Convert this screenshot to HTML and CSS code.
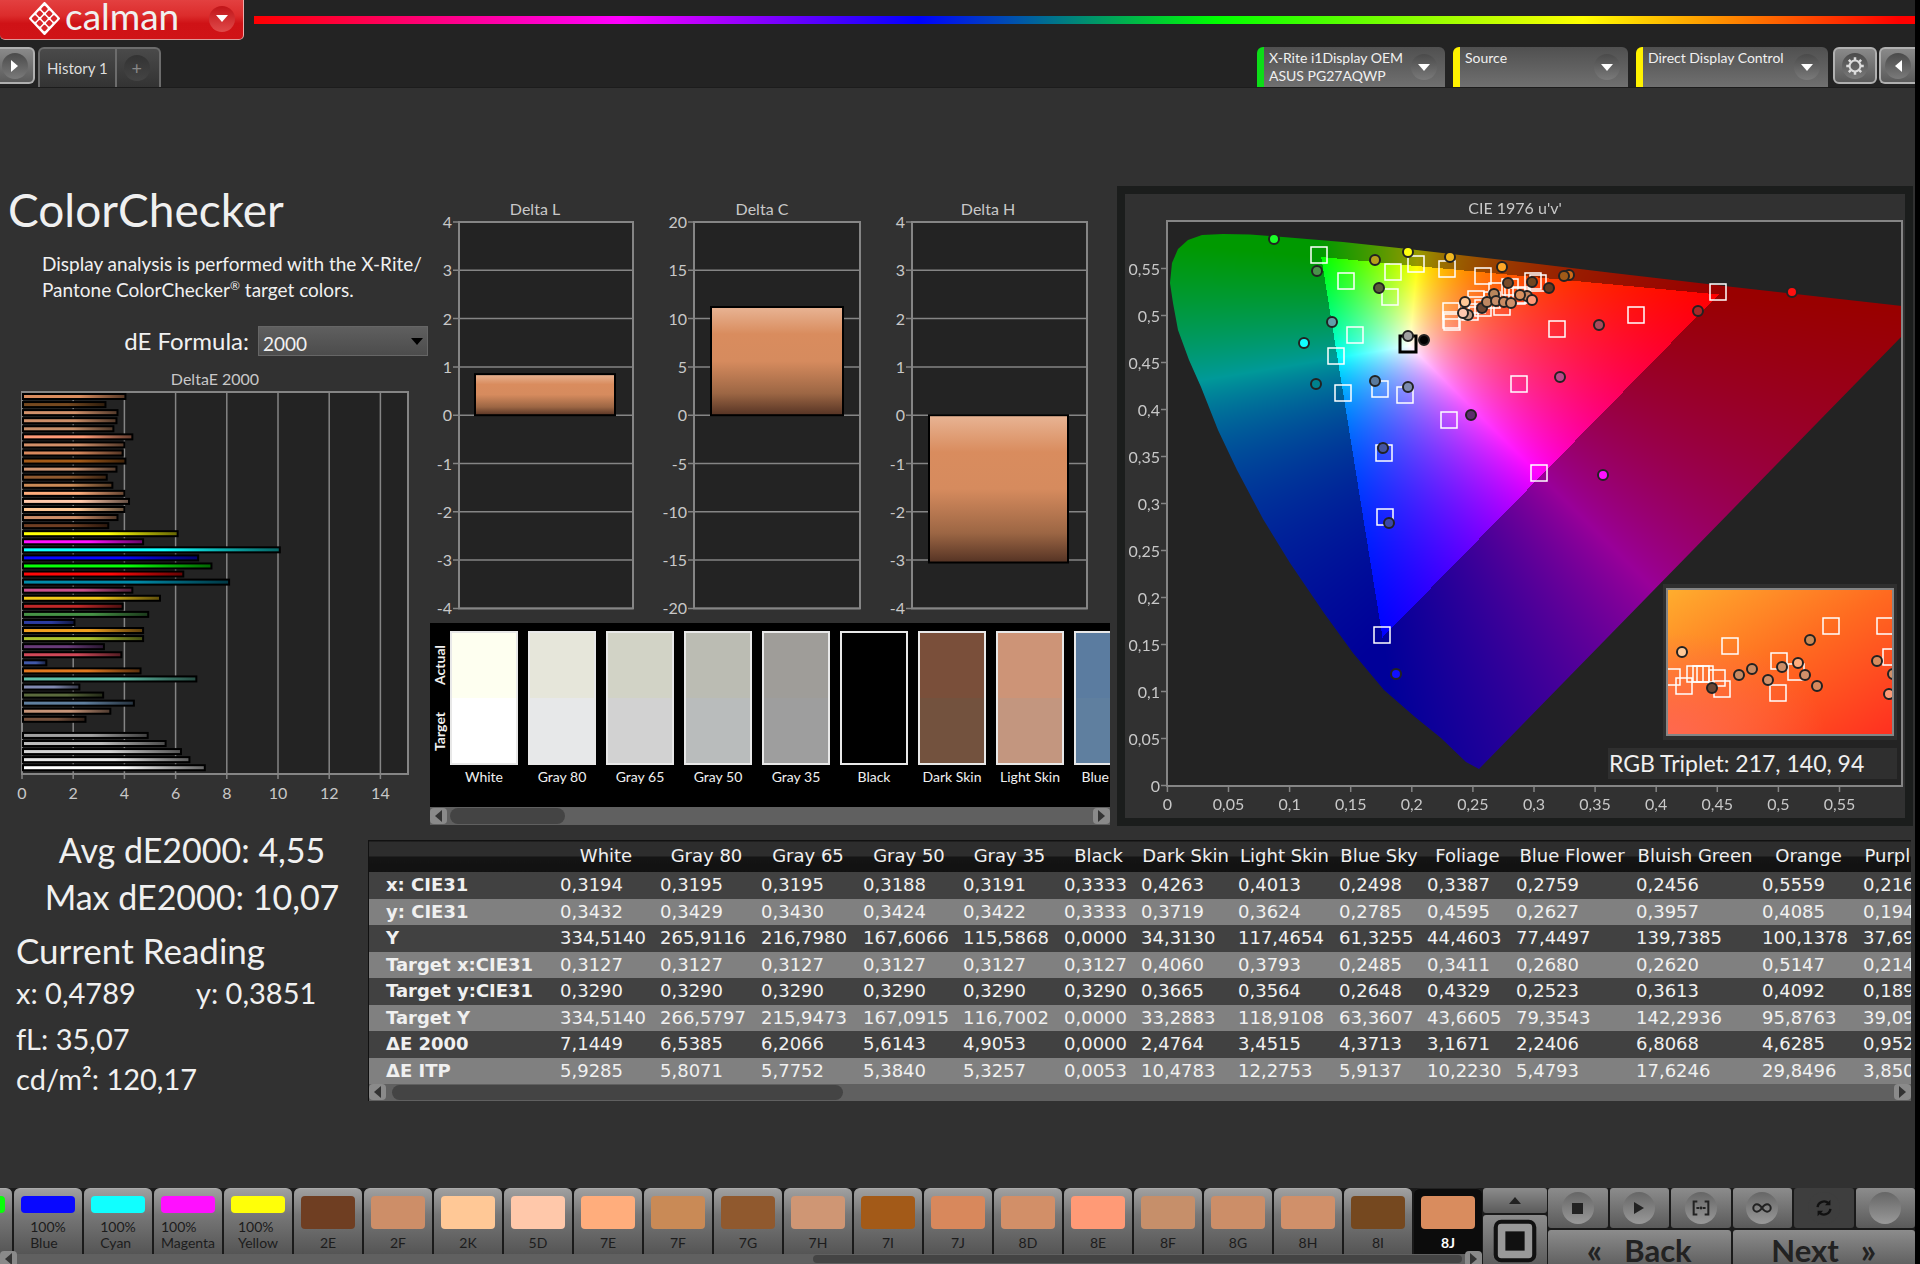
FILE: index.html
```html
<!DOCTYPE html>
<html lang="en">
<head>
  <meta charset="UTF-8" />
  <meta name="viewport" content="width=device-width, initial-scale=1.0" />
  <title>Calman - ColorChecker</title>
  <link rel="stylesheet" href="styles.css">
</head>
<body>
  <div class="app">
    <header class="header">
      <div class="brand-row">
        <button class="brand" aria-label="calman menu">
          <svg class="brand-mark" viewBox="0 0 32 32" aria-hidden="true">
            <path d="M16 1 L30 16 L16 31 L2 16 Z" fill="#fff" stroke="#fff" stroke-width="2" stroke-linejoin="round" />
            <g fill="#d8262a" transform="rotate(45 16 16)">
              <rect x="7" y="7" width="5" height="5" rx="1" /><rect x="13.5" y="7" width="5" height="5" rx="1" /><rect x="20" y="7" width="5" height="5" rx="1" />
              <rect x="7" y="13.5" width="5" height="5" rx="1" /><rect x="13.5" y="13.5" width="5" height="5" rx="1" /><rect x="20" y="13.5" width="5" height="5" rx="1" />
              <rect x="7" y="20" width="5" height="5" rx="1" /><rect x="13.5" y="20" width="5" height="5" rx="1" /><rect x="20" y="20" width="5" height="5" rx="1" />
            </g>
          </svg>
          <span class="brand-name">calman</span>
          <span class="knob knob-red"><i class="tri tri-down"></i></span>
        </button>
        <div class="rainbow"></div>
      </div>

      <div class="tab-row">
        <button class="square-btn square-left" aria-label="Show panel"><span class="knob"><i class="tri tri-right"></i></span></button>
        <nav class="tabs">
          <button class="tab">History 1</button>
          <button class="tab tab-add" aria-label="Add tab"><span class="knob knob-dark">+</span></button>
        </nav>
        <div class="devices">
          <button class="device device-meter">
            <span>X-Rite i1Display OEM<br>ASUS PG27AQWP</span>
            <span class="knob"><i class="tri tri-down"></i></span>
          </button>
          <button class="device device-source">
            <span>Source</span>
            <span class="knob"><i class="tri tri-down"></i></span>
          </button>
          <button class="device device-display">
            <span>Direct Display Control</span>
            <span class="knob"><i class="tri tri-down"></i></span>
          </button>
        </div>
        <button class="square-btn" aria-label="Settings">
          <span class="knob">
            <svg class="gear" viewBox="0 0 24 24" aria-hidden="true">
              <circle cx="12" cy="12" r="6.5" fill="none" stroke="#ddd" stroke-width="2.4" />
              <g stroke="#ddd" stroke-width="3">
                <path d="M12 1.5V5M12 19v3.5M1.5 12H5M19 12h3.5M4.6 4.6l2.4 2.4M17 17l2.4 2.4M4.6 19.4L7 17M17 7l2.4-2.4" />
              </g>
            </svg>
          </span>
        </button>
        <button class="square-btn square-right" aria-label="Hide panel"><span class="knob"><i class="tri tri-left"></i></span></button>
      </div>
    </header>

    <main class="main">
      <div class="charts">
        <section class="col-left">
          <h1>ColorChecker</h1>
          <p class="intro">Display analysis is performed with the X-Rite/<br>Pantone ColorChecker<sup>®</sup> target colors.</p>
          <div class="formula">
            <label for="formula">dE Formula:</label>
            <div class="select-wrap">
              <select id="formula">
                <option>2000</option>
                <option>ITP</option>
              </select>
            </div>
          </div>
          <svg class="chart" id="de-chart" viewBox="0 0 430 440" role="img" aria-label="DeltaE 2000"></svg>
        </section>

        <section class="col-mid">
          <svg class="chart" id="delta-chart" viewBox="0 0 680 437" role="img" aria-label="Delta L, Delta C, Delta H"></svg>
          <div class="swatches">
            <div class="swatch-area">
              <div class="swatch-side"><span>Actual</span><span>Target</span></div>
              <div class="swatch-list" id="swatches"></div>
            </div>
            <div class="scrollbar">
              <button aria-label="Scroll left"><i class="tri tri-left"></i></button>
              <div class="track"><div class="thumb thumb-swatch"></div></div>
              <button aria-label="Scroll right"><i class="tri tri-right"></i></button>
            </div>
          </div>
        </section>

        <section class="cie">
          <canvas id="cie-canvas" width="780" height="624"></canvas>
          <svg id="cie-chart" viewBox="0 0 780 624" role="img" aria-label="CIE 1976 u'v'"></svg>
        </section>
      </div>

      <div class="readings">
        <section class="stats">
          <div class="summary">Avg dE2000: 4,55</div>
          <div class="summary">Max dE2000: 10,07</div>
          <h2>Current Reading</h2>
          <div class="xy"><span>x: 0,4789</span><span>y: 0,3851</span></div>
          <div class="lum">
            <div>fL: 35,07</div>
            <div>cd/m²: 120,17</div>
          </div>
        </section>

        <section class="data">
          <div class="data-clip">
            <table id="data-table">
              <colgroup></colgroup>
              <thead></thead>
              <tbody></tbody>
            </table>
          </div>
          <div class="scrollbar">
            <button aria-label="Scroll left"><i class="tri tri-left"></i></button>
            <div class="track"><div class="thumb thumb-data"></div></div>
            <button aria-label="Scroll right"><i class="tri tri-right"></i></button>
          </div>
        </section>
      </div>
    </main>

    <footer class="footer">
      <div class="strip">
        <div class="patches" id="patches"></div>
        <div class="scrollbar">
          <button aria-label="Scroll left"><i class="tri tri-left"></i></button>
          <div class="track"><div class="thumb thumb-patch"></div></div>
          <button aria-label="Scroll right"><i class="tri tri-right"></i></button>
        </div>
      </div>
      <div class="window-ctl">
        <button class="key key-up" aria-label="Expand"><i class="tri tri-up"></i></button>
        <button class="key key-window" aria-label="Pattern window">
          <svg viewBox="0 0 32 32" aria-hidden="true">
            <rect x="2" y="2" width="28" height="28" rx="4" fill="#999" stroke="#111" stroke-width="3" />
            <rect x="9" y="9" width="14" height="14" fill="#111" />
          </svg>
        </button>
      </div>
      <div class="transport">
        <button class="key" aria-label="Stop"><span class="knob"><i class="stop"></i></span></button>
        <button class="key" aria-label="Play"><span class="knob"><i class="tri tri-play"></i></span></button>
        <button class="key" aria-label="Read series">
          <span class="knob">
            <svg viewBox="0 0 24 24" aria-hidden="true"><path d="M8 5H4v14h4M16 5h4v14h-4M7 12h3M14 12h3" fill="none" stroke="#222" stroke-width="2.2" /><circle cx="12" cy="12" r="1.6" fill="#222" /></svg>
          </span>
        </button>
        <button class="key" aria-label="Read continuous">
          <span class="knob">
            <svg viewBox="0 0 24 24" aria-hidden="true"><path d="M12 12C9.5 8.5 8 8 6.5 8a4 4 0 0 0 0 8c1.5 0 3-.5 5.5-4s4-4 5.500-4a4 4 0 0 1 0 8c-1.5 0-3-.5-5.5-4z" fill="none" stroke="#222" stroke-width="2.2" /></svg>
          </span>
        </button>
        <button class="key key-on" aria-label="Repeat">
          <span class="knob">
            <svg viewBox="0 0 24 24" aria-hidden="true"><path d="M5 11a7 7 0 0 1 12-4M19 13a7 7 0 0 1-12 4" fill="none" stroke="#111" stroke-width="2.6" /><path d="M19 3v6h-6zM5 21v-6h6z" fill="#111" /></svg>
          </span>
        </button>
        <button class="key" aria-label="Record"><span class="knob knob-light"></span></button>
        <button class="key key-wide"><span class="chev">«</span>Back</button>
        <button class="key key-wide">Next<span class="chev">»</span></button>
      </div>
    </footer>
  </div>

  <script src="script.js"></script>
</body>
</html>
```
FILE: styles.css
```css
/* --- basic reset ---------------------------------------------------- */
* {
  margin: 0;
  padding: 0;
  box-sizing: border-box;
}

:root {
  --bg: #313131;
  --dark: #232323;
  --fg: #f0f0f0;
  --muted: #c8c8c8;
  --line: #858585;
}

body {
  background: #000;
  color: var(--fg);
  font-family: Lato, "Open Sans", sans-serif;
  font-size: 16px;
  overflow: hidden;
}

button,
select {
  font: inherit;
  color: inherit;
  border: 0;
  cursor: pointer;
}

h1, h2 {
  font-weight: 400;
}

.app {
  display: flex;
  flex-direction: column;
  height: 100vh;
  margin-right: 5px;
  background: var(--bg);
}

/* --- small parts ---------------------------------------------------- */
.tri {
  display: block;
  width: 0;
  height: 0;
  border: 6px solid transparent;
}
.tri-down { border-top: 7px solid #fff; border-bottom: 0; }
.tri-up { border-bottom: 7px solid #222; border-top: 0; }
.tri-right { border-left: 7px solid #fff; border-right: 0; }
.tri-left { border-right: 7px solid #fff; border-left: 0; }
.tri-play { border-left: 10px solid #222; border-right: 0; }

.stop {
  width: 11px;
  height: 11px;
  background: #222;
}

.knob {
  display: flex;
  align-items: center;
  justify-content: center;
  width: 26px;
  height: 26px;
  border-radius: 50%;
  background: linear-gradient(#4a4a4a, #7a7a7a);
  flex-shrink: 0;
}
.knob-red { background: linear-gradient(#c01418, #e04a4a); }
.knob-dark { background: linear-gradient(#333, #444); color: #888; font-size: 18px; }
.knob-light { background: linear-gradient(#6a6a6a, #9a9a9a); }

.gear { width: 20px; height: 20px; }

/* --- header --------------------------------------------------------- */
.header {
  height: 88px;
  background: var(--dark);
  border-bottom: 1px solid #1c1c1c;
}

.brand-row {
  display: flex;
  height: 47px;
}

.brand {
  display: flex;
  align-items: center;
  width: 244px;
  height: 40px;
  padding: 0 8px 2px 28px;
  background: linear-gradient(#e34040, #dc2c2c 40%, #cf1216 60%, #d01317);
  border-right: 1px solid #eaa;
  border-bottom: 1px solid #d99;
  border-radius: 0 0 5px 5px;
}
.brand-mark { width: 33px; height: 33px; }
.brand-name {
  flex: 1;
  padding: 0 0 5px 4px;
  font-size: 37px;
  line-height: 44px;
  text-align: left;
}

.rainbow {
  flex: 1;
  height: 8px;
  margin: 16px 0 0 10px;
  background: linear-gradient(90deg, #f00, #f0f 22%, #00f 40%, #0f0 58%, #ff0 80%, #f00 99%);
}

.tab-row {
  display: flex;
  height: 40px;
}

.square-btn {
  display: flex;
  align-items: center;
  justify-content: center;
  width: 44px;
  height: 37px;
  margin-left: 2px;
  background: linear-gradient(#8a8a8a, #5a5a5a);
  border: 2px solid #b0b0b0;
  border-radius: 6px;
}
.square-left {
  width: 35px;
  margin-left: 0;
  padding-right: 4px;
  border-left: 0;
  border-radius: 0 6px 6px 0;
}
.square-right {
  width: 36px;
  border-right: 0;
  border-radius: 6px 0 0 6px;
}

.tabs {
  display: flex;
  margin-left: 3px;
}
.tab {
  height: 40px;
  padding: 0 7px;
  background: linear-gradient(#4a4a4a, #333);
  border: 2px solid #6c6c6c;
  border-bottom: 0;
  border-radius: 6px 0 0 0;
  font-size: 15px;
  color: #ddd;
}
.tab-add {
  width: 46px;
  margin-left: -2px;
  border-radius: 0 6px 0 0;
}

.devices {
  display: flex;
  gap: 8px;
  margin: 0 3px 0 auto;
}
.device {
  display: flex;
  justify-content: space-between;
  width: 188px;
  padding: 2px 8px 0 5px;
  background: linear-gradient(#505050, #707070);
  border-left: 7px solid #fff200;
  border-radius: 6px 6px 0 0;
  font-size: 14px;
  line-height: 18px;
  text-align: left;
  white-space: nowrap;
}
.device .knob { margin: 5px 0 0; }
.device-meter { border-left-color: #0ddc18; }
.device-source { width: 175px; }
.device-display { width: 192px; }

/* --- charts --------------------------------------------------------- */
.main {
  flex: 1;
  min-height: 0;
  padding-top: 92px;
}

.charts {
  display: grid;
  grid-template-columns: 430fr 680fr 7fr 796fr 2fr;
  align-items: start;
}
.charts > * { min-width: 0; }

.chart {
  display: block;
  width: 100%;
}

.col-left h1 {
  padding: 2px 0 0 8px;
  font-size: 46px;
  line-height: 56px;
}

.intro {
  padding: 13px 0 0 42px;
  font-size: 19px;
  line-height: 26px;
  white-space: nowrap;
}
.intro sup { font-size: 12px; line-height: 0; }

.formula {
  display: flex;
  justify-content: flex-end;
  align-items: center;
  gap: 9px;
  margin: 23px 2px 13px 0;
  font-size: 24px;
  line-height: 30px;
}
.select-wrap {
  position: relative;
  width: 170px;
}
.select-wrap::after {
  content: "";
  position: absolute;
  right: 5px;
  top: 12px;
  border: 6px solid transparent;
  border-top: 7px solid #000;
  border-bottom: 0;
  pointer-events: none;
}
.select-wrap select {
  display: block;
  width: 100%;
  height: 30px;
  padding: 2px 4px 0;
  appearance: none;
  background: linear-gradient(#5f5f5f, #4c4c4c);
  border: 1px solid #666;
  font-size: 19px;
}

.axis { font-size: 16px; fill: var(--muted); }
.chart-title { font-size: 16px; fill: var(--muted); text-anchor: middle; }
.end { text-anchor: end; }
.mid { text-anchor: middle; }
.plot { fill: var(--dark); }
.frame { fill: none; stroke: var(--line); stroke-width: 2; }
.grid { stroke: var(--line); stroke-width: 1.5; }
.bar { stroke: #000; stroke-width: 2; }

/* --- swatches ------------------------------------------------------- */
.swatches { margin-top: 6px; }
.swatch-area {
  display: flex;
  height: 184px;
  padding-top: 8px;
  background: #000;
  overflow: hidden;
}
.swatch-side {
  display: flex;
  flex-direction: column;
  justify-content: space-around;
  width: 20px;
  height: 134px;
  font-size: 14px;
  line-height: 20px;
  font-weight: 700;
}
.swatch-side span {
  writing-mode: vertical-rl;
  transform: rotate(180deg);
  text-align: center;
}
.swatch-list {
  display: flex;
  flex: 1;
  gap: 10px;
  min-width: 0;
  overflow: hidden;
}
.swatch {
  width: 68px;
  flex-shrink: 0;
  font-size: 14px;
  line-height: 24px;
  text-align: center;
  white-space: nowrap;
}
.swatch-color {
  height: 134px;
  border: 2px solid #e8e8e8;
}

.scrollbar {
  display: flex;
  align-items: center;
  height: 18px;
  background: #606060;
}
.scrollbar button {
  display: flex;
  align-items: center;
  justify-content: center;
  width: 17px;
  height: 16px;
  background: #8a8a8a;
  border-radius: 4px;
}
.scrollbar .tri-left { border-right-color: #333; }
.scrollbar .tri-right { border-left-color: #333; }
.track {
  flex: 1;
  height: 100%;
  padding: 1px 3px;
}
.thumb {
  height: 100%;
  background: #444;
  border-radius: 8px;
}
.thumb-swatch { width: 18%; }
.thumb-data { width: 30%; margin-left: 3px; }
.thumb-patch { width: 45%; margin-left: 55%; }

/* --- CIE diagram ---------------------------------------------------- */
.cie {
  display: grid;
  grid-column: 4;
  margin-top: 6px;
  border: 8px solid #1b1d1c;
}
.cie canvas,
.cie svg {
  grid-area: 1 / 1;
  width: 100%;
}
.target { fill: none; stroke: #fff; stroke-width: 1.5; }
.reading { stroke: #222; stroke-width: 2; }
.triplet { font-size: 23px; fill: var(--fg); }

/* --- readings ------------------------------------------------------- */
.readings {
  display: flex;
  margin-top: 14px;
}

.stats {
  width: 368px;
  flex-shrink: 0;
  margin-top: -14px;
  padding-left: 16px;
  font-size: 29px;
}
.summary {
  font-size: 34px;
  line-height: 47px;
  text-align: center;
}
.stats h2 {
  margin-top: 7px;
  font-size: 35px;
  line-height: 46px;
}
.xy {
  display: flex;
  line-height: 40px;
}
.xy span {
  width: 180px;
  flex-shrink: 0;
}
.lum {
  margin-top: 6px;
  line-height: 40px;
}

.data {
  flex: 1;
  min-width: 0;
  margin-right: 4px;
  border-left: 1px solid #111;
}
.data-clip { overflow: hidden; }
.data table {
  width: 1618px;
  table-layout: fixed;
  border-collapse: collapse;
  font-family: "DejaVu Sans", sans-serif;
  font-size: 18px;
  line-height: 24px;
  white-space: nowrap;
}
.data thead th {
  height: 31px;
  background: linear-gradient(#2d2d2d 50%, #141414 50%, #111);
  border-top: 1px solid #111;
  font-weight: 400;
}
.data td,
.data tbody th {
  height: 27px;
  padding-left: 4px;
  text-align: left;
}
.data tbody th { padding-left: 17px; }
.data tbody tr { background: #414141; }
.data tbody tr:nth-child(even) { background: #808080; }
.data tbody tr:nth-child(even) > * { height: 26px; }
.data .scrollbar { height: 17px; }

/* --- footer --------------------------------------------------------- */
.footer {
  display: flex;
  height: 76px;
  background: #1a1a1a;
  overflow: hidden;
}
.strip {
  flex: 1;
  min-width: 0;
}
.patches {
  display: flex;
  justify-content: flex-end;
  gap: 2px;
  height: 66px;
  overflow: hidden;
}
.patch {
  display: flex;
  flex-direction: column;
  align-items: center;
  justify-content: space-between;
  width: 68px;
  flex-shrink: 0;
  padding: 7px 0 3px;
  background: linear-gradient(#a0a0a0, #777 40%, #555);
  border-top: 1px solid #aaa;
  border-radius: 6px 6px 0 0;
  font-size: 14px;
  line-height: 16px;
  color: #1c1c1c;
  text-align: left;
}
.patch-color {
  width: 54px;
  height: 33px;
  border-radius: 4px;
}
.patch-half .patch-color { height: 17px; }
.patch-on {
  background: #0c0c0c;
  border-top-color: #222;
  color: #fff;
  font-weight: 700;
}
.strip .scrollbar { height: 10px; }

.key {
  display: flex;
  align-items: center;
  justify-content: center;
  background: linear-gradient(#8c8c8c, #5a5a5a);
  border-radius: 3px;
}
.key svg { width: 22px; height: 22px; }

.window-ctl {
  display: grid;
  grid-template-rows: 25px 52px;
  gap: 2px;
  width: 64px;
  margin-left: 1px;
}
.key-window svg { width: 44px; height: 44px; }

.transport {
  display: grid;
  grid-template-columns: repeat(6, 1fr);
  grid-template-rows: 40px 40px;
  gap: 2px;
  width: 367px;
  margin-left: 1px;
}
.transport .knob { width: 32px; height: 32px; background: linear-gradient(#666, #999); }
.key-on,
.transport .key-on .knob { background: #3e3e3e; }
.key-wide {
  grid-column: span 3;
  gap: 22px;
  font-size: 31px;
  font-weight: 700;
  line-height: 40px;
  color: #222;
}
.chev { font-size: 34px; }
```
FILE: script.js
```js
// ------------------- patch data ----------------------
// name, color, DeltaE 2000 (top of the chart first)
const patches = [
  ["8J", "#d98c5e", 4.04], ["8I", "#75481f", 3.26], ["8H", "#d0906a", 3.73], ["8G", "#cc8e68", 3.69],
  ["8F", "#c68f6a", 3.57], ["8E", "#ff9a76", 4.31], ["8D", "#d28f68", 4.0], ["7J", "#d8885c", 3.93],
  ["7I", "#a35a18", 4.04], ["7H", "#cf9674", 3.69], ["7G", "#90592e", 3.31], ["7F", "#c98a56", 3.53],
  ["7E", "#ffad7c", 4.0], ["5D", "#ffc8aa", 4.18], ["2K", "#ffc896", 4.0], ["2F", "#cd8e68", 3.73],
  ["2E", "#6f3e22", 3.37], ["100% Yellow", "#ffff08", 6.08], ["100% Magenta", "#ff10ff", 4.73],
  ["100% Cyan", "#10ffff", 10.07], ["100% Blue", "#0808ff", 6.88], ["100% Green", "#08ff08", 7.4],
  ["100% Red", "#ff0808", 6.3], ["Cyan", "#008aa8", 8.09], ["Magenta", "#c8508c", 4.31],
  ["Yellow", "#f0c81a", 5.39], ["Red", "#c02828", 3.93], ["Green", "#469246", 4.93],
  ["Blue", "#2c3ca0", 2.05], ["Orange Yellow", "#f0a020", 4.73], ["Yellow Green", "#a8c030", 4.73],
  ["Purple", "#683a78", 3.2], ["Moderate Red", "#d04858", 3.88], ["Purplish Blue", "#4058a8", 0.95],
  ["Orange", "#e07820", 4.63], ["Bluish Green", "#60c0a8", 6.81], ["Blue Flower", "#8088b0", 2.24],
  ["Foliage", "#5a6a3c", 3.17], ["Blue Sky", "#5f7f9f", 4.37], ["Light Skin", "#c69478", 3.45],
  ["Dark Skin", "#73503c", 2.48], ["Black", "#000", 0], ["Gray 35", "#a0a0a0", 4.91],
  ["Gray 50", "#bcbcbc", 5.61], ["Gray 65", "#d4d4d4", 6.21], ["Gray 80", "#e8e8e8", 6.54],
  ["White", "#fff", 7.14],
];

const text = (x, y, cls, s) => `<text x="${x}" y="${y}" class="${cls}">${s}</text>`;
const line = (x1, y1, x2, y2) => `<line x1="${x1}" y1="${y1}" x2="${x2}" y2="${y2}" class="grid"/>`;
const box = (x, y, w, h, cls, extra = "") =>
  `<rect x="${x}" y="${y}" width="${w}" height="${h}" class="${cls}" ${extra}/>`;

// ------------------- DeltaE chart ----------------------
function drawDeltaE() {
  const left = 22, top = 23, width = 386, height = 382, unit = 25.6;
  let out = text(215, 16, "chart-title", "DeltaE 2000");
  let defs = "";
  out += box(left, top, width, height, "plot");
  for (let v = 0; v <= 14; v += 2) {
    const x = left + v * unit;
    out += line(x, top, x, top + height + 5) + text(x, 430, "axis mid", v);
  }
  out += box(left, top, width, height, "frame");
  patches.forEach(([name, color, de], i) => {
    if (!de) return;
    defs += `<linearGradient id="p${i}"><stop offset="0" stop-color="${color}"/><stop offset="0.55" stop-color="${color}"/>
      <stop offset="1" stop-color="color-mix(in srgb, ${color}, #000 60%)"/></linearGradient>`;
    out += box(left + 1, top + 2 + i * 8.07, de * unit - 1, 5, "bar", `fill="url(#p${i})"`);
  });
  document.getElementById("de-chart").innerHTML = `<defs>${defs}</defs>${out}`;
}

// ------------------- Delta L / C / H ----------------------
function drawDeltas() {
  const charts = [
    { title: "Delta L", mid: 105, x: 29, w: 174, step: 1, bar: [45, 140], from: 0, to: 0.85 },
    { title: "Delta C", mid: 332, x: 264, w: 166, step: 5, bar: [281, 132], from: 0, to: 11.2 },
    { title: "Delta H", mid: 558, x: 482, w: 175, step: 1, bar: [499, 139], from: -3.05, to: 0 },
  ];
  const top = 42, cell = 48.3;
  let out = `<defs><linearGradient id="skin" x2="0" y2="1"><stop offset="0" stop-color="#e8b494"/>
    <stop offset="0.25" stop-color="#d98c5e"/><stop offset="0.5" stop-color="#d68b5e"/>
    <stop offset="0.8" stop-color="#9c6644"/><stop offset="1" stop-color="#553324"/></linearGradient></defs>`;
  charts.forEach((c) => {
    out += text(c.mid, 35, "chart-title", c.title) + box(c.x, top, c.w, cell * 8, "plot");
    for (let i = 0; i <= 8; i++) {
      const y = top + i * cell;
      out += line(c.x - 6, y, c.x + c.w, y) + text(c.x - 7, y + 6, "axis end", (4 - i) * c.step);
    }
    out += box(c.x, top, c.w, cell * 8, "frame");
    const y = top + (4 - c.to / c.step) * cell;
    out += box(c.bar[0], y, c.bar[1], ((c.to - c.from) / c.step) * cell, "bar", 'fill="url(#skin)"');
  });
  document.getElementById("delta-chart").innerHTML = out;
}

// ------------------- CIE 1976 u'v' ----------------------
const U0 = 42.4, V0 = 591.5, UX = 1222, VY = 939.7;

const locus = [
  [45, 89], [47, 69], [53, 55], [63, 46], [77, 41], [98, 40], [125, 40.5], [158, 43], [218, 48], [283, 55],
  [352, 63], [405, 69], [488, 79], [608, 93], [777, 112], [777, 142], [354, 575], [341, 568], [316, 544],
  [290, 523], [259, 496], [228, 459], [199, 419], [165, 369], [138, 325], [112, 276], [93, 236], [76, 193],
  [64, 166], [53, 136], [48, 109],
];
const gamut = [[195.7, 62.5], [593, 100], [257, 443]];

function inTriangle(x, y, [a, b, c]) {
  const side = (p, q) => (q[0] - p[0]) * (y - p[1]) - (q[1] - p[1]) * (x - p[0]) >= 0;
  return side(a, b) && side(b, c) && side(c, a);
}

// full brightness sRGB color of a chromaticity
function uvToRgb(u, v) {
  const d = 6 * u - 16 * v + 12;
  const x = (9 * u) / d, y = (4 * v) / d, z = 1 - x - y;
  const rgb = [
    3.2406 * x - 1.5372 * y - 0.4986 * z,
    -0.9689 * x + 1.8758 * y + 0.0415 * z,
    0.0557 * x - 0.204 * y + 1.057 * z,
  ].map((c) => Math.max(c, 0));
  const max = Math.max(...rgb);
  return rgb.map((c) => (c / max) * 255);
}

function paintCie() {
  const canvas = document.getElementById("cie-canvas");
  const ctx = canvas.getContext("2d");
  const img = ctx.createImageData(canvas.width, canvas.height);
  for (let y = 0; y < canvas.height; y++) {
    for (let x = 0; x < canvas.width; x++) {
      const k = inTriangle(x, y, gamut) ? 1 : 0.6;
      const rgb = uvToRgb((x - U0) / UX, (V0 - y) / VY);
      const i = (y * canvas.width + x) * 4;
      rgb.forEach((c, n) => (img.data[i + n] = c * k));
      img.data[i + 3] = 255;
    }
  }
  ctx.putImageData(img, 0, 0);
  const path = new Path2D();
  locus.forEach(([x, y]) => path.lineTo(x, y));
  ctx.globalCompositeOperation = "destination-in";
  ctx.fill(path);
  ctx.globalCompositeOperation = "destination-over";
  ctx.fillStyle = "#232323";
  ctx.fillRect(42, 27, 735, 565);
}

const targets = [
  [194, 61], [221, 87], [268, 78], [291, 70], [265, 103], [322, 75], [230, 141], [211, 162], [218, 199],
  [255, 195], [280, 201], [324, 226], [259, 259], [260, 323], [257, 441], [394, 190], [358, 82], [326, 117],
  [326, 126], [327, 128], [351, 105], [372, 97], [385, 93], [345, 118], [352, 111], [358, 114], [367, 106],
  [377, 113], [392, 102], [396, 101], [408, 87], [413, 89], [593, 98], [511, 121], [432, 135], [414, 279],
];
const readings = [
  [149, 45, "#1aff28"], [250, 66, "#b5a01a"], [283, 58, "#ffff10"], [325, 63, "#f0b820"], [377, 73, "#ffa828"],
  [192, 77, "#4a924a"], [254, 94, "#5a5a3a"], [207, 128, "#60a0a8"], [179, 149, "#10ffff"], [191, 190, "#00828e"],
  [250, 187, "#5a7a9c"], [283, 193, "#7c8cb0"], [283, 142, "#a0a0a0"], [299, 146, "#000"], [346, 221, "#5c2e6c"],
  [258, 254, "#4454a0"], [264, 329, "#3c48a8"], [271, 480, "#1010ff"], [340, 108, "#ffc896"],
  [343, 121, "#c49a80"], [338, 119, "#ffc8b0"], [357, 114, "#6a4634"], [362, 108, "#c08862"], [369, 100, "#b8865c"],
  [371, 107, "#c88e6a"], [379, 108, "#c98a62"], [386, 109, "#d0906a"], [383, 89, "#784a28"],
  [402, 102, "#c88860"], [395, 101, "#d9905e"], [407, 106, "#ff9a78"], [407, 88, "#704620"],
  [424, 94, "#643a20"], [444, 81, "#d06a18"], [439, 82, "#a05a18"], [474, 131, "#a84a5c"],
  [573, 117, "#a82828"], [667, 98, "#ff1010"], [435, 183, "#b84a8a"], [478, 281, "#ff10ff"],
];

const zoomTargets = [
  [547, 483], [559, 492], [570, 480], [576, 480], [580, 480], [592, 484], [597, 495], [605, 452], [654, 467],
  [671, 478], [653, 499], [706, 432], [760, 432], [766, 463],
];
const zoomReadings = [
  [557, 458, "#ffc896"], [587, 494, "#6a4634"], [614, 481, "#c98a62"], [627, 475, "#c98a62"],
  [643, 486, "#d0906a"], [657, 473, "#cd8e68"], [673, 469, "#ffad7c"], [680, 481, "#d0906a"],
  [692, 492, "#d8885c"], [685, 446, "#c98a56"], [752, 467, "#d98c5e"], [768, 480, "#d28f68"], [764, 500, "#ff9a76"],
];

const square = ([x, y]) => box(x - 8, y - 8, 16, 16, "target");
const dot = ([x, y, color]) => `<circle cx="${x}" cy="${y}" r="5" class="reading" fill="${color}"/>`;
const comma = (n) => String(n).replace(".", ",");

function drawCie() {
  let out = `<defs>
    <linearGradient id="warm" x2="1" y2="1"><stop offset="0" stop-color="#ffae2e"/><stop offset="0.5" stop-color="#ff6a20"/>
    <stop offset="1" stop-color="#ff2f20"/></linearGradient>
    <radialGradient id="pink" cx="0" cy="1" r="0.7"><stop offset="0" stop-color="#ff6850"/><stop offset="1" stop-color="#ff6850" stop-opacity="0"/></radialGradient>
    <clipPath id="zoom-clip"><rect x="542" y="395" width="226" height="146"/></clipPath></defs>`;
  out += text(390, 20, "chart-title", "CIE 1976 u'v'") + box(42, 27, 735, 565, "frame");
  for (let i = 0; i <= 11; i++) {
    const x = U0 + i * 61.1, y = V0 - i * 47;
    const label = comma((i * 5) / 100);
    out += line(x, 592, x, 598) + text(x, 616, "axis mid", label);
    out += line(36, y, 42, y) + text(35, y + 6, "axis end", label);
  }
  out += targets.map(square).join("");
  out += `<rect x="275" y="142" width="16" height="16" fill="none" stroke="#000" stroke-width="3"/>`;
  out += readings.map(dot).join("");

  // magnified part around the current reading
  out += box(538, 390, 234, 156, "", 'fill="#2f2f2f"');
  out += box(542, 395, 226, 146, "", 'fill="url(#warm)"') + box(542, 395, 226, 146, "", 'fill="url(#pink)"');
  out += `<g clip-path="url(#zoom-clip)">${zoomTargets.map(square).join("")}${zoomReadings.map(dot).join("")}</g>`;
  out += box(542, 395, 226, 146, "frame");
  out += box(483, 554, 289, 31, "", 'fill="#2f2f2f"') + text(484, 578, "triplet", "RGB Triplet: 217, 140, 94");
  document.getElementById("cie-chart").innerHTML = out;
}

// ------------------- swatches ----------------------
const swatches = [
  ["White", "#fefff0", "#ffffff"], ["Gray 80", "#e6e6da", "#e7e8e9"], ["Gray 65", "#d2d3c6", "#d2d2d2"],
  ["Gray 50", "#bbbcb3", "#b9bcbc"], ["Gray 35", "#9f9d99", "#9e9e9e"], ["Black", "#000", "#000"],
  ["Dark Skin", "#7a4f3a", "#73523e"], ["Light Skin", "#cd9477", "#c3967f"], ["Blue Sky", "#5b7ca0", "#5f7f9f"],
];
document.getElementById("swatches").innerHTML = swatches.map(([name, actual, target]) =>
  `<div class="swatch"><div class="swatch-color" style="background:linear-gradient(${actual} 50%, ${target} 50%)"></div>${name}</div>`
).join("");

// ------------------- data table ----------------------
const columns = [
  ["", 187], ["White", 100], ["Gray 80", 101], ["Gray 65", 102], ["Gray 50", 100], ["Gray 35", 101], ["Black", 77],
  ["Dark Skin", 97], ["Light Skin", 101], ["Blue Sky", 88], ["Foliage", 89], ["Blue Flower", 120],
  ["Bluish Green", 126], ["Orange", 101], ["Purplish Blue", 128],
];
const rows = [
  ["x: CIE31", "0,3194", "0,3195", "0,3195", "0,3188", "0,3191", "0,3333", "0,4263", "0,4013", "0,2498", "0,3387", "0,2759", "0,2456", "0,5559", "0,2160"],
  ["y: CIE31", "0,3432", "0,3429", "0,3430", "0,3424", "0,3422", "0,3333", "0,3719", "0,3624", "0,2785", "0,4595", "0,2627", "0,3957", "0,4085", "0,1940"],
  ["Y", "334,5140", "265,9116", "216,7980", "167,6066", "115,5868", "0,0000", "34,3130", "117,4654", "61,3255", "44,4603", "77,4497", "139,7385", "100,1378", "37,6900"],
  ["Target x:CIE31", "0,3127", "0,3127", "0,3127", "0,3127", "0,3127", "0,3127", "0,4060", "0,3793", "0,2485", "0,3411", "0,2680", "0,2620", "0,5147", "0,2140"],
  ["Target y:CIE31", "0,3290", "0,3290", "0,3290", "0,3290", "0,3290", "0,3290", "0,3665", "0,3564", "0,2648", "0,4329", "0,2523", "0,3613", "0,4092", "0,1890"],
  ["Target Y", "334,5140", "266,5797", "215,9473", "167,0915", "116,7002", "0,0000", "33,2883", "118,9108", "63,3607", "43,6605", "79,3543", "142,2936", "95,8763", "39,0900"],
  ["ΔE 2000", "7,1449", "6,5385", "6,2066", "5,6143", "4,9053", "0,0000", "2,4764", "3,4515", "4,3713", "3,1671", "2,2406", "6,8068", "4,6285", "0,9520"],
  ["ΔE ITP", "5,9285", "5,8071", "5,7752", "5,3840", "5,3257", "0,0053", "10,4783", "12,2753", "5,9137", "10,2230", "5,4793", "17,6246", "29,8496", "3,8500"],
];
const table = document.getElementById("data-table");
table.querySelector("colgroup").innerHTML = columns.map((c) => `<col style="width:${c[1]}px">`).join("");
table.tHead.innerHTML = `<tr>${columns.map((c) => `<th scope="col">${c[0]}</th>`).join("")}</tr>`;
table.tBodies[0].innerHTML = rows.map(([head, ...cells]) =>
  `<tr><th scope="row">${head}</th>${cells.map((c) => `<td>${c}</td>`).join("")}</tr>`
).join("");

// ------------------- patch strip ----------------------
document.getElementById("patches").innerHTML = patches.slice(0, 22).reverse().map(([name, color]) => {
  const half = name.startsWith("100%");
  const cls = half ? "patch patch-half" : name === "8J" ? "patch patch-on" : "patch";
  return `<button class="${cls}"><span class="patch-color" style="background:${color}"></span><span>${name.replace(" ", "<br>")}</span></button>`;
}).join("");

drawDeltaE();
drawDeltas();
paintCie();
drawCie();
```
